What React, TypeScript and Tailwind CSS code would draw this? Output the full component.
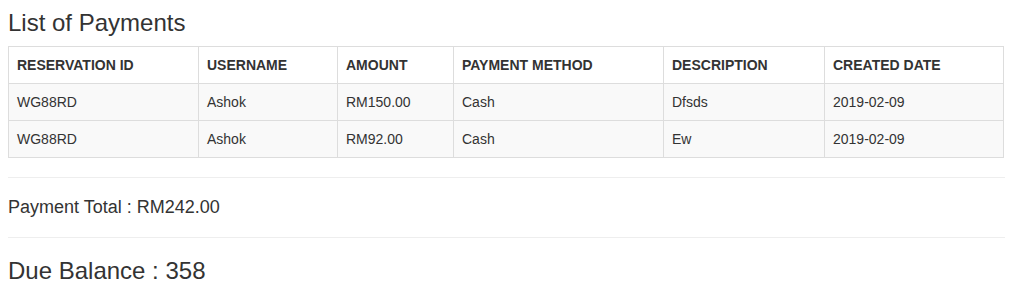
const payments = [
  { id: 'WG88RD', user: 'Ashok', amount: 'RM150.00', method: 'Cash', desc: 'Dfsds', date: '2019-02-09' },
  { id: 'WG88RD', user: 'Ashok', amount: 'RM92.00', method: 'Cash', desc: 'Ew', date: '2019-02-09' },
];

const headers = ['Reservation ID', 'Username', 'Amount', 'Payment Method', 'Description', 'Created Date'];

export default function App() {
  return (
    <div className="min-h-screen bg-white px-2 pt-[10px] font-['Liberation_Sans',Arial,sans-serif] text-[#333]">
      <h3 className="mb-[10px] text-[24px] leading-[26px]">List of Payments</h3>

      <table className="w-[996px] table-fixed border-collapse border border-[#ddd] text-[14px] leading-5">
        <colgroup>
          <col className="w-[190px]" />
          <col className="w-[139px]" />
          <col className="w-[116px]" />
          <col className="w-[210px]" />
          <col className="w-[161px]" />
          <col />
        </colgroup>
        <thead>
          <tr>
            {headers.map((h) => (
              <th key={h} className="border border-[#ddd] p-2 text-left font-bold uppercase">
                {h}
              </th>
            ))}
          </tr>
        </thead>
        <tbody>
          {payments.map((p, i) => (
            <tr key={i} className="bg-[#f9f9f9]">
              <td className="border border-[#ddd] p-2">{p.id}</td>
              <td className="border border-[#ddd] p-2">{p.user}</td>
              <td className="border border-[#ddd] p-2">{p.amount}</td>
              <td className="border border-[#ddd] p-2">{p.method}</td>
              <td className="border border-[#ddd] p-2">{p.desc}</td>
              <td className="border border-[#ddd] p-2">{p.date}</td>
            </tr>
          ))}
        </tbody>
      </table>

      <hr className="mt-[19px] border-t border-[#eee]" />
      <h4 className="pt-[19px] pb-5 text-[18px] leading-5">Payment Total : RM242.00</h4>
      <hr className="border-t border-[#eee]" />
      <h3 className="pt-5 text-[24px] leading-[26px]">Due Balance : 358</h3>
    </div>
  );
}
